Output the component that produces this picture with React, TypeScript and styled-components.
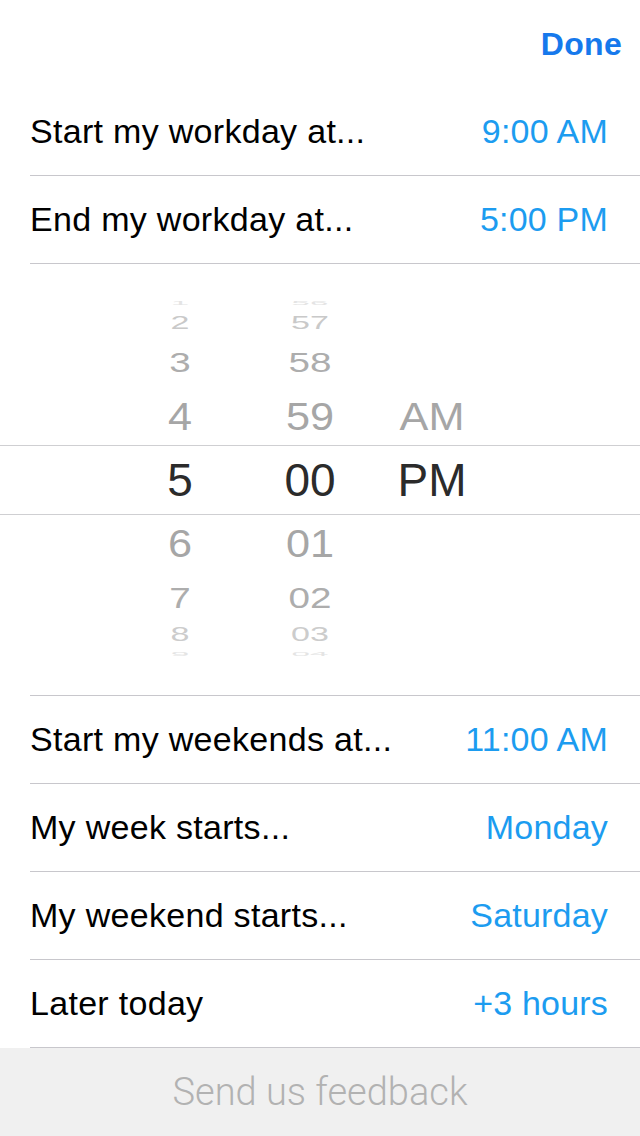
import React from "react";
import styled, { createGlobalStyle } from "styled-components";

const GlobalStyle = createGlobalStyle`
  html, body { margin: 0; padding: 0; background: #ffffff; }
  body { font-family: "Liberation Sans", Arial, sans-serif; -webkit-font-smoothing: antialiased; }
  * { box-sizing: border-box; }
`;

const Screen = styled.div`
  width: 640px;
  height: 1136px;
  display: flex;
  flex-direction: column;
  background: #ffffff;
  overflow: hidden;
`;

const Header = styled.div`
  height: 88px;
  display: flex;
  align-items: center;
  justify-content: flex-end;
  padding-right: 18px;
`;

const DoneButton = styled.button`
  border: none;
  background: none;
  padding: 0;
  font-family: "Liberation Sans", Arial, sans-serif;
  font-weight: 700;
  font-size: 32px;
  letter-spacing: 0.3px;
  color: #1679ec;
  cursor: pointer;
`;

const Row = styled.div`
  height: 88px;
  margin-left: 30px;
  padding-right: 32px;
  border-bottom: 1px solid #c8c7cc;
  display: flex;
  align-items: center;
  justify-content: space-between;
`;

const Label = styled.span`
  font-size: 34px;
  letter-spacing: 0.3px;
  color: #000000;
`;

const Value = styled.span`
  font-size: 34px;
  letter-spacing: 0.2px;
  color: #1c9cf0;
`;

const PickerSection = styled.div`
  height: 432px;
  margin-left: 30px;
  border-bottom: 1px solid #c8c7cc;
  display: flex;
  flex-direction: column;
  justify-content: center;
`;

const Wheel = styled.div`
  margin-left: -30px;
  display: flex;
  flex-direction: column;
`;

const WheelRow = styled.div<{ $h: number; $selected?: boolean }>`
  height: ${(p) => p.$h}px;
  flex: 0 0 auto;
  display: flex;
  align-items: center;
  padding-left: 115px;
  border-top: ${(p) => (p.$selected ? "1px solid #cfcfd2" : "none")};
  border-bottom: ${(p) => (p.$selected ? "1px solid #cfcfd2" : "none")};
`;

const Cell = styled.span<{ $sx: number; $sy: number; $color: string }>`
  flex: 0 0 130px;
  text-align: center;
  font-size: 46px;
  line-height: 46px;
  color: ${(p) => p.$color};
  transform: scale(${(p) => p.$sx}, ${(p) => p.$sy});
  white-space: nowrap;
  &:nth-child(3) {
    flex-basis: 114px;
  }
`;

const Footer = styled.div`
  flex: 1;
  background: #f0f0f0;
  display: flex;
  align-items: center;
  justify-content: center;
`;

const FooterText = styled.span`
  font-family: Roboto, "Liberation Sans", Arial, sans-serif;
  font-weight: 300;
  font-size: 38px;
  color: #b2b2b2;
`;

type WheelItem = {
  h: number;
  sx: number;
  sy: number;
  color: string;
  cells: [string, string, string];
  selected?: boolean;
};

const wheelItems: WheelItem[] = [
  { h: 13, sx: 0.72, sy: 0.12, color: "#e4e4e4", cells: ["1", "56", ""] },
  { h: 27, sx: 0.74, sy: 0.4, color: "#c9c9c9", cells: ["2", "57", ""] },
  { h: 51, sx: 0.84, sy: 0.62, color: "#adadad", cells: ["3", "58", ""] },
  { h: 57, sx: 0.94, sy: 0.86, color: "#a6a6a6", cells: ["4", "59", "AM"] },
  { h: 70, sx: 1, sy: 1, color: "#2b2b2b", cells: ["5", "00", "PM"], selected: true },
  { h: 57, sx: 0.94, sy: 0.86, color: "#a6a6a6", cells: ["6", "01", ""] },
  { h: 51, sx: 0.84, sy: 0.66, color: "#adadad", cells: ["7", "02", ""] },
  { h: 23, sx: 0.74, sy: 0.42, color: "#cccccc", cells: ["8", "03", ""] },
  { h: 17, sx: 0.72, sy: 0.12, color: "#e4e4e4", cells: ["9", "04", ""] },
];

const topRows = [
  { label: "Start my workday at...", value: "9:00 AM" },
  { label: "End my workday at...", value: "5:00 PM" },
];

const bottomRows = [
  { label: "Start my weekends at...", value: "11:00 AM" },
  { label: "My week starts...", value: "Monday" },
  { label: "My weekend starts...", value: "Saturday" },
  { label: "Later today", value: "+3 hours" },
];

export default function App() {
  return (
    <>
      <GlobalStyle />
      <Screen>
        <Header>
          <DoneButton>Done</DoneButton>
        </Header>
        {topRows.map((r) => (
          <Row key={r.label}>
            <Label>{r.label}</Label>
            <Value>{r.value}</Value>
          </Row>
        ))}
        <PickerSection>
          <Wheel>
            {wheelItems.map((it, i) => (
              <WheelRow key={i} $h={it.h} $selected={it.selected}>
                {it.cells.map((c, j) => (
                  <Cell key={j} $sx={it.sx} $sy={it.sy} $color={it.color}>
                    {c}
                  </Cell>
                ))}
              </WheelRow>
            ))}
          </Wheel>
        </PickerSection>
        {bottomRows.map((r) => (
          <Row key={r.label}>
            <Label>{r.label}</Label>
            <Value>{r.value}</Value>
          </Row>
        ))}
        <Footer>
          <FooterText>Send us feedback</FooterText>
        </Footer>
      </Screen>
    </>
  );
}
